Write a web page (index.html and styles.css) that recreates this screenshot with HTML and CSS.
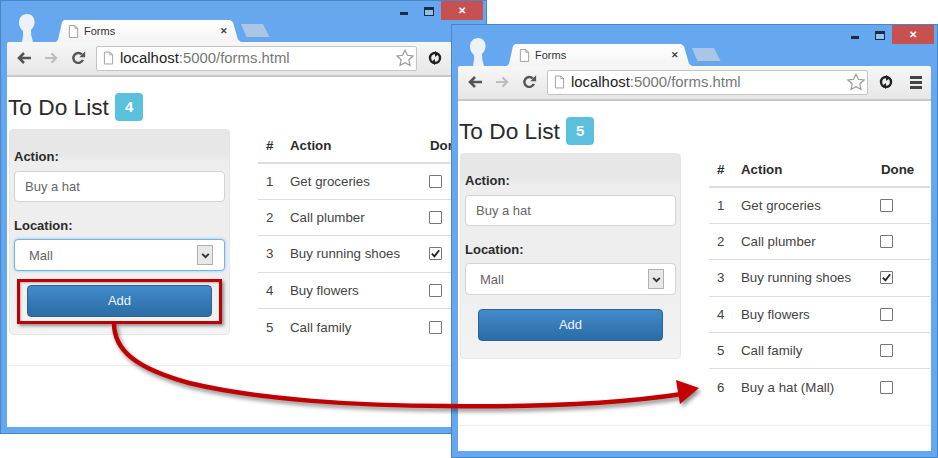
FILE: index.html
```html
<!DOCTYPE html>
<html lang="en">
<head>
<meta charset="utf-8">
<title>Forms</title>
<link rel="stylesheet" href="styles.css">
</head>
<body>
<svg width="0" height="0" class="defs">
  <symbol id="i-page" viewBox="0 0 12 14"><path d="M1.5.5h6l3 3v10h-9z M7.5.5v3h3" fill="#fff" stroke="#9a9a9a" stroke-width="1"/></symbol>
  <symbol id="i-back" viewBox="0 0 16 14"><path d="M15 7H4M8 2 3 7l5 5" fill="none" stroke="currentColor" stroke-width="2.6"/></symbol>
  <symbol id="i-fwd" viewBox="0 0 16 14"><path d="M1 7h11M8 2l5 5-5 5" fill="none" stroke="currentColor" stroke-width="2.2"/></symbol>
  <symbol id="i-reload" viewBox="0 0 15 15"><path d="M12.2 9.5A5.3 5.3 0 1 1 11 3.6" fill="none" stroke="#555" stroke-width="2.6"/><path d="M8.4 6.6H14.6V.4z" fill="#555"/></symbol>
  <symbol id="i-star" viewBox="0 0 18 18"><path d="M9 1.2l2.4 5.1 5.6.7-4.1 3.8 1.1 5.6L9 13.7l-5 2.7 1.1-5.6L1 7l5.6-.7z" fill="#fff" stroke="#999" stroke-width="1.2"/></symbol>
  <symbol id="i-sync" viewBox="0 0 14 14"><circle cx="7" cy="7" r="5" fill="none" stroke="#222" stroke-width="2.4"/><path d="M7 0 11 3 7 6zM7 14 3 11l4-3z" fill="#222"/></symbol>
  <symbol id="i-tick" viewBox="0 0 12 12"><path d="M2 6.2 4.8 9.2 10 2.5" fill="none" stroke="#222" stroke-width="2"/></symbol>
  <symbol id="i-head" viewBox="0 0 18 28"><path d="M9 0c5 0 8 4 7.500 9-.3 3-2 5.500-3.500 7l.2 5 1.800 7H4l1.200-7-.2-4C2.500 15 1 12 1 8.500 1 3.500 4.500 0 9 0z" fill="#eef2f6"/></symbol>
</svg>

<section class="window window-first">
  <div class="caption">
    <span class="cap-min"></span><span class="cap-max"></span><span class="cap-close">✕</span>
  </div>
  <div class="tabstrip">
    <svg class="head"><use href="#i-head"/></svg>
    <div class="tab">
      <svg class="tab-page"><use href="#i-page"/></svg>
      <span class="tab-title">Forms</span>
      <span class="tab-x">✕</span>
    </div>
    <div class="newtab"></div>
  </div>
  <div class="toolbar">
    <svg class="nav back"><use href="#i-back"/></svg>
    <svg class="nav fwd"><use href="#i-fwd"/></svg>
    <svg class="nav reload"><use href="#i-reload"/></svg>
    <div class="omnibox">
      <svg class="omni-page"><use href="#i-page"/></svg>
      <span class="url"><b>localhost</b>:5000/forms.html</span>
      <svg class="star"><use href="#i-star"/></svg>
    </div>
    <svg class="sync"><use href="#i-sync"/></svg>
  </div>
  <main class="page">
    <h3 class="title">To Do List <span class="badge">4</span></h3>
    <div class="columns">
      <form class="panel">
        <label class="lbl">Action:</label>
        <div class="field">Buy a hat</div>
        <label class="lbl lbl-second">Location:</label>
        <div class="field field-select field-focus">Mall<span class="drop"><svg viewBox="0 0 10 10"><path d="M2 3.500 5 6.500 8 3.500" fill="none" stroke="#333" stroke-width="1.800"/></svg></span></div>
        <div class="btn">Add</div>
      </form>
      <table class="todo">
        <thead><tr><th class="c-n">#</th><th class="c-a">Action</th><th class="c-d">Done</th></tr></thead>
        <tbody>
          <tr><td>1</td><td>Get groceries</td><td><span class="box"></span></td></tr>
          <tr><td>2</td><td>Call plumber</td><td><span class="box"></span></td></tr>
          <tr><td>3</td><td>Buy running shoes</td><td><span class="box"><svg><use href="#i-tick"/></svg></span></td></tr>
          <tr><td>4</td><td>Buy flowers</td><td><span class="box"></span></td></tr>
          <tr><td>5</td><td>Call family</td><td><span class="box"></span></td></tr>
        </tbody>
      </table>
    </div>
    <hr class="rule">
  </main>
</section>

<section class="window window-second">
  <div class="caption">
    <span class="cap-min"></span><span class="cap-max"></span><span class="cap-close">✕</span>
  </div>
  <div class="tabstrip">
    <svg class="head"><use href="#i-head"/></svg>
    <div class="tab">
      <svg class="tab-page"><use href="#i-page"/></svg>
      <span class="tab-title">Forms</span>
      <span class="tab-x">✕</span>
    </div>
    <div class="newtab"></div>
  </div>
  <div class="toolbar">
    <svg class="nav back"><use href="#i-back"/></svg>
    <svg class="nav fwd"><use href="#i-fwd"/></svg>
    <svg class="nav reload"><use href="#i-reload"/></svg>
    <div class="omnibox">
      <svg class="omni-page"><use href="#i-page"/></svg>
      <span class="url"><b>localhost</b>:5000/forms.html</span>
      <svg class="star"><use href="#i-star"/></svg>
    </div>
    <svg class="sync"><use href="#i-sync"/></svg>
    <span class="menu"><i></i><i></i><i></i></span>
  </div>
  <main class="page">
    <h3 class="title">To Do List <span class="badge">5</span></h3>
    <div class="columns">
      <form class="panel">
        <label class="lbl">Action:</label>
        <div class="field">Buy a hat</div>
        <label class="lbl lbl-second">Location:</label>
        <div class="field field-select">Mall<span class="drop"><svg viewBox="0 0 10 10"><path d="M2 3.500 5 6.500 8 3.500" fill="none" stroke="#333" stroke-width="1.800"/></svg></span></div>
        <div class="btn">Add</div>
      </form>
      <table class="todo">
        <thead><tr><th class="c-n">#</th><th class="c-a">Action</th><th class="c-d">Done</th></tr></thead>
        <tbody>
          <tr><td>1</td><td>Get groceries</td><td><span class="box"></span></td></tr>
          <tr><td>2</td><td>Call plumber</td><td><span class="box"></span></td></tr>
          <tr><td>3</td><td>Buy running shoes</td><td><span class="box"><svg><use href="#i-tick"/></svg></span></td></tr>
          <tr><td>4</td><td>Buy flowers</td><td><span class="box"></span></td></tr>
          <tr><td>5</td><td>Call family</td><td><span class="box"></span></td></tr>
          <tr><td>6</td><td>Buy a hat (Mall)</td><td><span class="box"></span></td></tr>
        </tbody>
      </table>
    </div>
    <hr class="rule">
  </main>
</section>

<div class="callout"></div>
<svg class="arrow" viewBox="0 0 938 458" width="938" height="458">
  <path d="M114 323C114 350 135 368 189 383C260 400 360 406 446 406C520 407 610 405 682 394" fill="none" stroke="#c00000" stroke-width="4.500"/>
  <path d="M676 380 699 388 680 404z" fill="#c40000"/>
</svg>
</body>
</html>
```
FILE: styles.css
```css
* { box-sizing: border-box; }
html, body { margin: 0; padding: 0; }
body {
  position: relative;
  width: 938px;
  height: 458px;
  overflow: hidden;
  background: #fff;
  font-family: "Liberation Sans", Arial, sans-serif;
  color: #333;
}
.defs { position: absolute; }

.window {
  position: absolute;
  width: 487px;
  height: 434px;
  display: flex;
  flex-direction: column;
  padding: 0 6px 6px;
  background: #66a8f0;
  border: 1px solid #4a86c6;
}
.window-first { left: 0; top: 0; }
.window-second { left: 451px; top: 24px; }

.caption {
  height: 19px;
  margin-right: -3px;
  display: flex;
  justify-content: flex-end;
  align-items: flex-start;
}
.cap-min { width: 8px; height: 3px; margin: 11px 16px 0 0; background: #1c2c40; }
.cap-max { width: 10px; height: 9px; margin: 6px 7px 0 0; border: 1px solid #1c2c40; border-top-width: 3px; background: #8fc0f4; }
.cap-close {
  width: 42px;
  height: 19px;
  background: #c75050;
  color: #fff;
  font-size: 10px;
  font-weight: bold;
  line-height: 19px;
  text-align: center;
}

.tabstrip { height: 22px; display: flex; align-items: flex-end; }
.head { width: 18px; height: 28px; margin: -6px 0 0 11px; flex: none; align-self: flex-end; }
.tab {
  width: 188px;
  height: 22px;
  margin-left: 18px;
  display: flex;
  align-items: center;
  padding-left: 14px;
  background: linear-gradient(#fff, #f4f4f4);
  clip-path: polygon(0 100%, 2px 100%, 4px 90%, 8px 10%, 10px 0, 176px 0, 179px 10%, 184px 90%, 187px 100%, 188px 100%);
}
.tab-page { width: 11px; height: 13px; flex: none; }
.tab-title { margin-left: 5px; font-size: 11px; color: #333; }
.tab-x { margin-left: 105px; font-size: 9px; font-weight: bold; color: #444; }
.newtab {
  width: 29px;
  height: 14px;
  margin: 0 0 4px -1px;
  background: #a9c6e6;
  border-bottom: 1px solid #7f9fc4;
  clip-path: polygon(0 0, 22px 0, 29px 100%, 6px 100%);
}

.toolbar {
  height: 35px;
  flex: none;
  display: flex;
  align-items: center;
  padding-bottom: 1px;
  background: linear-gradient(#f7f7f7, #e6e6e6);
  border-bottom: 2px solid #c8c8c8;
  border-radius: 2px 2px 0 0;
}
.nav { flex: none; height: 14px; }
.back { width: 16px; margin-left: 9px; color: #555; }
.fwd { width: 15px; margin-left: 12px; color: #bdbdbd; }
.reload { width: 15px; margin-left: 12px; }
.omnibox {
  width: 321px;
  height: 25px;
  margin-left: 10px;
  flex: none;
  display: flex;
  align-items: center;
  padding-left: 6px;
  background: #fff;
  border: 1px solid #c4c4c4;
  border-radius: 2px;
}
.omni-page { width: 11px; height: 14px; flex: none; }
.url { margin-left: 6px; font-size: 14.900px; color: #777; white-space: nowrap; }
.url b { font-weight: normal; color: #222; }
.star { width: 18px; height: 18px; margin-left: auto; margin-right: 2px; }
.sync { width: 14px; height: 14px; margin-left: 11px; flex: none; }
.menu { width: 12px; margin-left: 17px; display: flex; flex-direction: column; gap: 2px; flex: none; }
.menu i { height: 3px; background: #444; }

.page { flex: 1; min-height: 0; padding: 16px 1px 0; background: #fff; overflow: hidden; }
.title {
  height: 28px;
  margin: 0;
  display: flex;
  align-items: center;
  font-size: 22.700px;
  font-weight: normal;
  color: #2a2a2a;
  white-space: pre;
}
.badge {
  width: 28px;
  height: 28px;
  background: #5bc0de;
  border-radius: 4px;
  color: #fff;
  font-size: 15px;
  font-weight: bold;
  line-height: 28px;
  text-align: center;
}

.columns { display: flex; align-items: flex-start; margin-top: 8px; }
.panel {
  width: 221px;
  height: 206px;
  margin-left: 1px;
  flex: none;
  padding: 19px 4px 0;
  background: linear-gradient(#e7e7e7 0, #e7e7e7 24px, #eee 32px, #eee 130px, #f3f3f3 206px);
  border: 1px solid #e6e6e6;
  border-radius: 4px;
}
.lbl { display: block; height: 16px; font-size: 13px; font-weight: bold; line-height: 16px; color: #2b2b2b; }
.lbl-second { margin-top: 16px; }
.field {
  height: 31px;
  margin-top: 6px;
  padding-left: 10px;
  background: #fff;
  border: 1px solid #d4d4d4;
  border-radius: 4px;
  font-size: 13px;
  line-height: 29px;
  color: #666;
}
.lbl-second + .field { margin-top: 5px; height: 32px; }
.field-select { display: flex; justify-content: space-between; align-items: center; padding: 0 11px 0 14px; }
.field-focus { border-color: #6fb5ee; box-shadow: 0 0 3px rgba(102, 175, 233, .7); }
.drop {
  width: 16px;
  height: 20px;
  display: flex;
  align-items: center;
  justify-content: center;
  background: #e8e8e8;
  border: 1px solid #b0b0b0;
}
.drop svg { width: 11px; height: 11px; }
.btn {
  width: 185px;
  height: 32px;
  margin: 14px 0 0 13px;
  background: linear-gradient(#428bca, #2a6ca6);
  border: 1px solid #2a6496;
  border-radius: 4px;
  color: #eef4fa;
  font-size: 13px;
  line-height: 30px;
  text-align: center;
}

.todo {
  width: 221px;
  margin: -2px 0 0 28px;
  flex: none;
  table-layout: fixed;
  border-collapse: collapse;
  font-size: 13.300px;
  color: #444;
}
.todo th {
  height: 36px;
  padding: 2px 8px 0;
  border-bottom: 2px solid #ddd;
  font-weight: bold;
  color: #2b2b2b;
  text-align: left;
}
.c-n { width: 24px; }
.c-a { width: 148px; }
.todo th.c-n { padding: 2px 0 0 8px; }
.todo th.c-d { padding: 2px 0 0; }
.todo td { height: 36.400px; padding: 0 0 0 8px; border-top: 1px solid #ddd; white-space: nowrap; }
.todo thead + tbody tr:first-child td { border-top: 0; }
.todo td:last-child { padding: 0; }
.box {
  width: 13px;
  height: 13px;
  margin-left: -1px;
  display: block;
  background: #fff;
  border: 1px solid #777;
  border-radius: 1px;
}
.box svg { width: 11px; height: 11px; display: block; }

.rule { height: 0; margin: 20px 0 0; border: 0; border-top: 1px solid #eee; }

.callout {
  position: absolute;
  left: 17px;
  top: 279px;
  width: 205px;
  height: 45px;
  border: 3px solid #c00000;
  box-shadow: 2px 2px 3px rgba(0, 0, 0, .4), inset 1px 1px 2px rgba(0, 0, 0, .25);
}
.arrow {
  position: absolute;
  left: 0;
  top: 0;
  pointer-events: none;
  filter: drop-shadow(2px 3px 2px rgba(0, 0, 0, .45));
}
```
